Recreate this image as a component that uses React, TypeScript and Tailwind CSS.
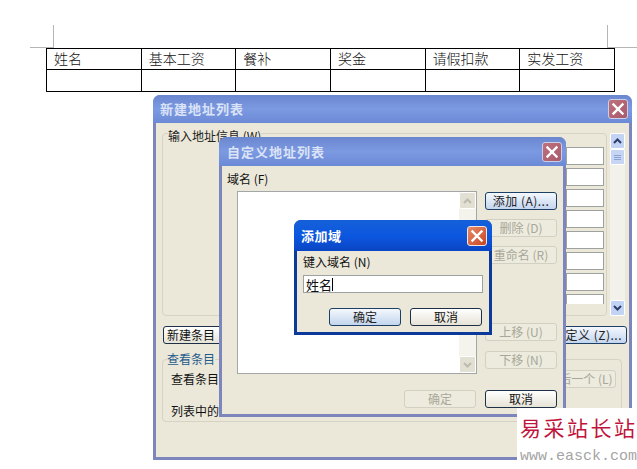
import React from "react";

const cjk = "font-['Noto_Sans_CJK_SC','Liberation_Sans',sans-serif]";

function CloseBtn({ tone }: { tone: "dim" | "active" }) {
  const cls =
    tone === "active"
      ? "bg-gradient-to-br from-[#e58a68] to-[#c9431f] border-[#f4e6de]"
      : "bg-gradient-to-br from-[#c0707c] to-[#a85a6c] border-[#c9cfe8]";
  return (
    <div className={`w-[20px] h-[20px] rounded-[3px] border flex items-center justify-center ${cls}`}>
      <svg width="14" height="14" viewBox="0 0 14 14">
        <path d="M2.5 2.5 L11.5 11.5 M11.5 2.5 L2.5 11.5" stroke="#ffffff" strokeWidth="2.4" strokeLinecap="square" />
      </svg>
    </div>
  );
}

function Btn({
  children,
  kind = "normal",
  className = "",
}: {
  children: React.ReactNode;
  kind?: "normal" | "default" | "disabled";
  className?: string;
}) {
  const cls =
    kind === "disabled"
      ? "border-[#d2d0c0] bg-[#ecebde] text-[#a9a797]"
      : kind === "default"
        ? "border-[#1d3f66] bg-gradient-to-b from-[#f4f8fd] to-[#c3d5ee] text-[#222]"
        : "border-[#1d3048] bg-gradient-to-b from-[#ffffff] to-[#e6e3d6] text-[#111]";
  return (
    <div
      className={`h-[18px] shrink-0 rounded-[3px] border flex items-center justify-center whitespace-nowrap text-[12px] leading-none ${cls} ${className}`}
    >
      {children}
    </div>
  );
}

function Chevron({ up, color }: { up: boolean; color: string }) {
  return (
    <svg width="9" height="6" viewBox="0 0 9 6">
      <path d={up ? "M1 5 L4.5 1.5 L8 5" : "M1 1 L4.5 4.5 L8 1"} fill="none" stroke={color} strokeWidth="2" />
    </svg>
  );
}

const fields = [0, 1, 2, 3, 4, 5, 6, 7];

export default function App() {
  return (
    <div className={`relative w-[637px] h-[469px] overflow-hidden bg-white text-[#111] ${cjk}`}>
      {/* Page corner marks */}
      <div className="flex justify-between pt-[25px] pl-[30px]">
        <div className="w-[24px] h-[23px] border-r border-b border-[#b5b5b5]" />
        <div className="w-[30px] h-[23px] border-l border-b border-[#b5b5b5]" />
      </div>

      {/* Document table */}
      <table className="ml-[46px] w-[569px] table-fixed border-collapse text-[14px] leading-none">
        <tbody>
          <tr className="h-[21px]">
            {["姓名", "基本工资", "餐补", "奖金", "请假扣款", "实发工资"].map((t) => (
              <td key={t} className="border border-black px-[7px] pt-0 pb-[2px] font-light">
                {t}
              </td>
            ))}
          </tr>
          <tr className="h-[22px]">
            {[0, 1, 2, 3, 4, 5].map((i) => (
              <td key={i} className="border border-black" />
            ))}
          </tr>
        </tbody>
      </table>

      {/* Back window */}
      <div className="absolute left-[153px] top-[95px] w-[479px] h-[365px] flex flex-col rounded-t-[7px] overflow-hidden bg-[#7c86bc]">
        <div className="h-[28px] shrink-0 pl-[7px] pr-[4px] flex items-center justify-between bg-gradient-to-b from-[#6a86cf] via-[#7c9ae2] to-[#6c89d6]">
          <span className="text-[13px] font-bold tracking-[1px] text-[#dbe3f6]">新建地址列表</span>
          <CloseBtn tone="dim" />
        </div>
        <div className="mx-[3px] mb-[3px] flex-1 bg-[#ebe8da] pl-[6px] pt-[10px]">
          <div className="flex">
            <div className="w-[445px] h-[183px] shrink-0 rounded-[4px] border border-[#d6d3c4] flex flex-col">
              <span className="-mt-[6px] ml-[5px] h-[19px] w-fit bg-[#ebe8da] text-[12px] leading-[16px] text-[#222]">输入地址信息 (W)</span>
              <div className="ml-[403px] w-[38px] h-[157px] overflow-hidden flex flex-col gap-[3px]">
                {fields.map((i) => (
                  <div key={i} className="h-[18px] shrink-0 bg-white border border-[#9da1a0]" />
                ))}
              </div>
            </div>
            <div className="ml-[3px] w-[15px] h-[183px] bg-[#f3f2ea] flex flex-col justify-between">
              <div>
                <div className="h-[16px] rounded-[2px] border border-white bg-[#c3d3f3] flex items-center justify-center">
                  <Chevron up color="#2b3f6b" />
                </div>
                <div className="h-[16px] rounded-[2px] border border-white bg-[#c6d5f4] flex flex-col items-center justify-center gap-[1px]">
                  <div className="w-[7px] h-px bg-[#8aa2d4]" />
                  <div className="w-[7px] h-px bg-[#8aa2d4]" />
                  <div className="w-[7px] h-px bg-[#8aa2d4]" />
                </div>
              </div>
              <div className="h-[16px] rounded-[2px] border border-white bg-[#c3d3f3] flex items-center justify-center">
                <Chevron up={false} color="#2b3f6b" />
              </div>
            </div>
          </div>

          <div className="mt-[10px] flex justify-between pl-px pr-[2px]">
            <Btn className="w-[70px] justify-start pl-[3px]">新建条目</Btn>
            <Btn kind="default" className="w-[90px] justify-end pr-[4px] tracking-[0.5px]">
              自定义 (Z)...
            </Btn>
          </div>

          <div className="mt-[15px] w-[460px] h-[63px] rounded-[4px] border border-[#d6d3c4] pl-[8px] pr-[5px] flex flex-col">
            <span className="-mt-[9px] -ml-[4px] text-[12px] leading-[16px] text-[#1f5c8c] w-fit bg-[#ebe8da]">查看条目</span>
            <div className="mt-[3px] flex items-center justify-between">
              <span className="text-[12px] leading-[16px]">查看条目</span>
              <Btn kind="disabled" className="w-[72px]">
                最后一个 (L)
              </Btn>
            </div>
            <span className="mt-[15px] text-[12px] leading-[16px]">列表中的</span>
          </div>
        </div>
      </div>

      {/* Middle window */}
      <div className="absolute left-[219px] top-[137px] w-[347px] h-[280px] flex flex-col rounded-t-[7px] overflow-hidden bg-[#7c86bc]">
        <div className="h-[29px] shrink-0 pl-[8px] pr-[4px] flex items-center justify-between bg-gradient-to-b from-[#6a86cf] via-[#7c9ae2] to-[#6c89d6]">
          <span className="text-[13px] font-bold tracking-[1px] text-[#dbe3f6]">自定义地址列表</span>
          <CloseBtn tone="dim" />
        </div>
        <div className="mx-[3px] mb-[3px] flex-1 bg-[#ebe8da] flex flex-col">
          <span className="ml-[5px] mt-[5px] text-[12px] leading-[16px] h-[20px]">域名 (F)</span>
          <div className="flex items-start ml-[15px]">
            <div className="w-[240px] h-[183px] bg-white border border-[#a4a7a8] flex justify-end">
              <div className="w-[17px] h-full bg-[#f4f3ec] flex flex-col justify-between">
                <div className="h-[17px] rounded-[2px] border border-white bg-[#e2e0d3] flex items-center justify-center">
                  <Chevron up color="#bdbbad" />
                </div>
                <div className="h-[17px] rounded-[2px] border border-white bg-[#e2e0d3] flex items-center justify-center">
                  <Chevron up={false} color="#bdbbad" />
                </div>
              </div>
            </div>
            <div className="ml-[8px] mt-[1px] flex flex-col">
              <Btn kind="default" className="w-[72px] tracking-[0.5px]">添加 (A)...</Btn>
              <Btn kind="disabled" className="w-[72px] mt-[9px]">删除 (D)</Btn>
              <Btn kind="disabled" className="w-[72px] mt-[9px]">重命名 (R)</Btn>
              <Btn kind="disabled" className="w-[72px] mt-[59px]">上移 (U)</Btn>
              <Btn kind="disabled" className="w-[72px] mt-[10px]">下移 (N)</Btn>
            </div>
          </div>
          <div className="mt-[16px] pr-[6px] flex justify-end gap-[9px]">
            <Btn kind="disabled" className="w-[72px]">确定</Btn>
            <Btn className="w-[72px]">取消</Btn>
          </div>
        </div>
      </div>

      {/* Front dialog */}
      <div className="absolute left-[294px] top-[220px] w-[198px] h-[115px] flex flex-col rounded-t-[7px] overflow-hidden bg-[#0b3a9a]">
        <div className="h-[31px] shrink-0 pl-[7px] pr-[5px] flex items-center justify-between bg-gradient-to-b from-[#1560d8] via-[#0c57e0] to-[#0a45c4]">
          <span className="text-[13px] font-bold tracking-[0.5px] text-white">添加域</span>
          <CloseBtn tone="active" />
        </div>
        <div className="mx-[3px] mb-[3px] flex-1 bg-[#ebe8da] pl-[6px] pt-[3px] flex flex-col">
          <span className="text-[12px] leading-[16px]">键入域名 (N)</span>
          <div className="mt-[5px] w-[180px] h-[18px] bg-white border border-[#9da1a0] flex items-center pl-[2px] text-[13px] leading-none">
            姓名<span className="w-px h-[13px] bg-black" />
          </div>
          <div className="mt-[15px] flex gap-[9px] pl-[26px]">
            <Btn kind="default" className="w-[72px]">确定</Btn>
            <Btn className="w-[72px]">取消</Btn>
          </div>
        </div>
      </div>

      {/* Watermark */}
      <div className="absolute left-[517px] top-[408px] w-[120px] h-[61px] bg-white pl-[3px] flex flex-col">
        <span className="mt-[5px] text-[21px] leading-[28px] tracking-[2.5px] whitespace-nowrap text-[#c0143c]">易采站长站</span>
        <span className="mt-[8px] font-['Liberation_Mono',monospace] text-[15px] leading-[16px] whitespace-nowrap text-[#a5a5a5]">www.easck.com</span>
      </div>
    </div>
  );
}
